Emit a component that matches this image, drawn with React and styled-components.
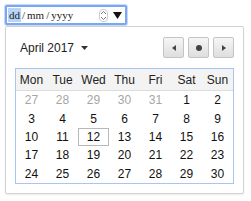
import React from "react";
import styled, { createGlobalStyle } from "styled-components";

const Global = createGlobalStyle`
  html, body { margin: 0; padding: 0; background: #fff; }
  body { font-family: "Liberation Sans", Arial, sans-serif; }
`;

const weeks = [
  [27, 28, 29, 30, 31, 1, 2],
  [3, 4, 5, 6, 7, 8, 9],
  [10, 11, 12, 13, 14, 15, 16],
  [17, 18, 19, 20, 21, 22, 23],
  [24, 25, 26, 27, 28, 29, 30],
];
const dayNames = ["Mon", "Tue", "Wed", "Thu", "Fri", "Sat", "Sun"];

function App() {
  return (
    <Wrapper>
      <Global />
      <DateInput>
        <Field>
          <Seg $active>dd</Seg>
          <Sep>/</Sep>
          <Seg>mm</Seg>
          <Sep>/</Sep>
          <Seg>yyyy</Seg>
        </Field>
        <Spin>
          <svg width="7" height="11" viewBox="0 0 7 11">
            <path d="M1 4 L3.5 1.5 L6 4" fill="none" stroke="#777" strokeWidth="1" />
            <path d="M1 7 L3.5 9.5 L6 7" fill="none" stroke="#777" strokeWidth="1" />
          </svg>
        </Spin>
        <Drop>
          <svg width="9" height="7" viewBox="0 0 9 7">
            <path d="M0 0 H9 L4.5 7 Z" fill="#111" />
          </svg>
        </Drop>
      </DateInput>
      <Popup>
        <Header>
          <MonthLabel>
            April 2017
            <svg width="7" height="4" viewBox="0 0 7 4">
              <path d="M0 0 H7 L3.5 4 Z" fill="#333" />
            </svg>
          </MonthLabel>
          <NavGroup>
            <NavButton>
              <svg width="4" height="6" viewBox="0 0 4 6">
                <path d="M4 0 V6 L0 3 Z" fill="#444" />
              </svg>
            </NavButton>
            <NavButton>
              <svg width="6" height="6" viewBox="0 0 6 6">
                <circle cx="3" cy="3" r="3" fill="#444" />
              </svg>
            </NavButton>
            <NavButton>
              <svg width="4" height="6" viewBox="0 0 4 6">
                <path d="M0 0 V6 L4 3 Z" fill="#444" />
              </svg>
            </NavButton>
          </NavGroup>
        </Header>
        <Table>
          <HeadRow>
            {dayNames.map((d) => (
              <HeadCell key={d}>{d}</HeadCell>
            ))}
          </HeadRow>
          <Body>
            {weeks.map((w, wi) =>
              w.map((d, di) => (
                <Day
                  key={wi + "-" + di}
                  $muted={wi === 0 && d > 20}
                  $today={wi === 2 && d === 12}
                >
                  {d}
                </Day>
              ))
            )}
          </Body>
        </Table>
      </Popup>
    </Wrapper>
  );
}

const Wrapper = styled.div`
  padding: 5px 0 0 5px;
  width: 251px;
  height: 201px;
  box-sizing: border-box;
`;

const DateInput = styled.div`
  box-sizing: border-box;
  width: 122px;
  height: 20px;
  border: 2px solid #7aa7ee;
  border-radius: 2px;
  display: flex;
  align-items: center;
  padding: 0 3px 0 1px;
  background: #fff;
  box-shadow: 0 0 0 1px #c6dafb;
`;

const Field = styled.div`
  flex: 1;
  display: flex;
  align-items: center;
  font-family: "Liberation Serif", "Times New Roman", serif;
  font-size: 11px;
  color: #222;
`;

const Seg = styled.span`
  background: ${(p) => (p.$active ? "#b8d4f8" : "transparent")};
  padding: 0 1px;
  line-height: 14px;
`;

const Sep = styled.span`
  padding: 0 1px;
`;

const Spin = styled.div`
  width: 9px;
  height: 13px;
  border: 1px solid #ccc;
  border-radius: 4px;
  display: flex;
  align-items: center;
  justify-content: center;
  margin-right: 5px;
  box-sizing: border-box;
`;

const Drop = styled.div`
  display: flex;
  align-items: center;
`;

const Popup = styled.div`
  box-sizing: border-box;
  width: 239px;
  margin-top: 1px;
  border: 1px solid #d2d2d2;
  border-radius: 2px;
  padding: 10px 9px 9px;
  background: #fff;
  box-shadow: 0 1px 2px rgba(0, 0, 0, 0.08);
`;

const Header = styled.div`
  display: flex;
  align-items: center;
  justify-content: space-between;
  height: 21px;
  margin-bottom: 10px;
`;

const MonthLabel = styled.div`
  display: flex;
  align-items: center;
  gap: 7px;
  padding-left: 5px;
  font-size: 12px;
  color: #222;
`;

const NavGroup = styled.div`
  display: flex;
  gap: 4px;
`;

const NavButton = styled.div`
  box-sizing: border-box;
  width: 21px;
  height: 21px;
  border: 1px solid #c4c4c4;
  border-radius: 2px;
  background: linear-gradient(#f6f6f6, #dedede);
  display: flex;
  align-items: center;
  justify-content: center;
`;

const Table = styled.div`
  box-sizing: border-box;
  width: 219px;
  border: 1px solid #a8c6f2;
`;

const HeadRow = styled.div`
  display: grid;
  grid-template-columns: repeat(7, 1fr);
  height: 21px;
  background: #f3f3f3;
  border-bottom: 1px solid #dcdcdc;
`;

const HeadCell = styled.div`
  display: flex;
  align-items: center;
  justify-content: center;
  font-size: 12px;
  color: #222;
`;

const Body = styled.div`
  display: grid;
  grid-template-columns: repeat(7, 1fr);
  grid-auto-rows: 18.4px;
`;

const Day = styled.div`
  box-sizing: border-box;
  display: flex;
  align-items: center;
  justify-content: center;
  font-size: 12px;
  color: ${(p) => (p.$muted ? "#a6a6a6" : "#111")};
  border: 1px solid ${(p) => (p.$today ? "#b8b8b8" : "transparent")};
`;

export default App;
